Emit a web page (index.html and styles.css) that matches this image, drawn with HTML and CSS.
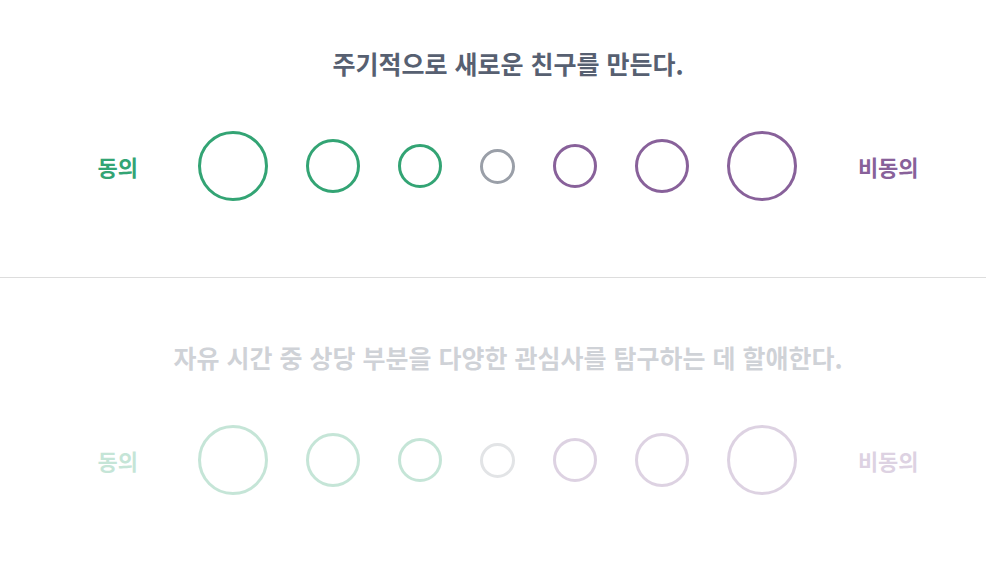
FILE: index.html
```html
<!DOCTYPE html>
<html lang="ko">
<head>
<meta charset="utf-8">
<title>설문</title>
<link rel="stylesheet" href="styles.css">
</head>
<body>
<div class="survey">
  <section class="question">
    <div class="inner">
      <h2 class="q-title">주기적으로 새로운 친구를 만든다.</h2>
      <div class="scale">
        <span class="label agree">동의</span>
        <div class="options">
          <span class="opt agree-c xl"></span>
          <span class="opt agree-c lg"></span>
          <span class="opt agree-c md"></span>
          <span class="opt neutral sm"></span>
          <span class="opt disagree-c md"></span>
          <span class="opt disagree-c lg"></span>
          <span class="opt disagree-c xl"></span>
        </div>
        <span class="label disagree">비동의</span>
      </div>
    </div>
  </section>
  <section class="question inactive">
    <div class="inner">
      <h2 class="q-title">자유 시간 중 상당 부분을 다양한 관심사를 탐구하는 데 할애한다.</h2>
      <div class="scale">
        <span class="label agree">동의</span>
        <div class="options">
          <span class="opt agree-c xl"></span>
          <span class="opt agree-c lg"></span>
          <span class="opt agree-c md"></span>
          <span class="opt neutral sm"></span>
          <span class="opt disagree-c md"></span>
          <span class="opt disagree-c lg"></span>
          <span class="opt disagree-c xl"></span>
        </div>
        <span class="label disagree">비동의</span>
      </div>
    </div>
  </section>
</div>
</body>
</html>
```
FILE: styles.css
```css
html, body {
  margin: 0;
  padding: 0;
  background: #ffffff;
  overflow: hidden;
}

body {
  font-family: "Noto Sans CJK KR", "Noto Sans", sans-serif;
}

.survey {
  margin-top: -16px;
}

.question {
  border-bottom: 1px solid #dddddd;
  padding: 63px 0 76px;
}

.question .inner {
  padding-left: 30px;
  display: flex;
  flex-direction: column;
  align-items: center;
  gap: 52px;
}

.q-title {
  margin: 0;
  font-size: 25px;
  line-height: 32px;
  font-weight: 700;
  color: #576071;
  text-align: center;
}

.scale {
  display: flex;
  align-items: center;
  height: 70px;
}

.label {
  font-size: 22px;
  line-height: 26px;
  font-weight: 700;
}

.label.agree {
  color: #33a474;
  margin-right: 60px;
}

.label.disagree {
  color: #88619a;
  margin-left: 61px;
}

.options {
  display: flex;
  align-items: center;
  gap: 38px;
}

.opt {
  display: block;
  box-sizing: border-box;
  border-radius: 50%;
  border: 3px solid #9a9fa8;
}

.opt.xl { width: 70px; height: 70px; }
.opt.lg { width: 54px; height: 54px; }
.opt.md { width: 44px; height: 44px; }
.opt.sm { width: 35px; height: 35px; }

.opt.agree-c { border-color: #33a474; }
.opt.disagree-c { border-color: #88619a; }
.opt.neutral { border-color: #9a9fa8; }

.question.inactive .inner {
  opacity: 0.28;
}
```
